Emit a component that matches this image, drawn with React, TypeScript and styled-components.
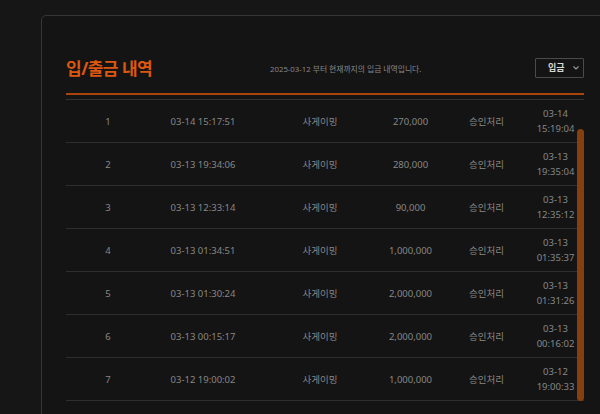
import React, { useLayoutEffect, useRef, useState } from "react";
import styled, { createGlobalStyle } from "styled-components";

const GlobalStyle = createGlobalStyle`
  html, body {
    margin: 0;
    padding: 0;
    height: 100%;
    overflow: hidden;
    background: #161616;
  }
  body {
    font-family: "Noto Sans", "Noto Sans CJK KR", sans-serif;
  }
`;

const Page = styled.div`
  padding: 15px 0 0 41px;
`;

const Card = styled.section`
  width: 518px;
  padding: 0 24px 60px;
  background: #141414;
  border: 1px solid #363636;
  border-radius: 5px;
`;

const Header = styled.header`
  display: grid;
  grid-template-columns: 204px 1fr auto;
  align-items: center;
  padding: 40px 0 11px;
  border-bottom: 2px solid #a8440c;
`;

const Title = styled.h2`
  margin: 0;
  font-family: "Noto Sans", "Noto Sans CJK KR", sans-serif;
  font-size: 17px;
  line-height: 26px;
  font-weight: 700;
  letter-spacing: -0.5px;
  color: #dd5710;
`;

const Subtitle = styled.p`
  margin: 0;
  font-size: 7.8px;
  line-height: 12px;
  color: #878787;
`;

const SelectBox = styled.button`
  display: flex;
  align-items: center;
  justify-content: space-between;
  width: 49px;
  height: 20px;
  margin-top: -3px;
  padding: 0 4px 0 12px;
  box-sizing: border-box;
  background: #141414;
  border: 1px solid #4a4a4a;
  border-radius: 1px;
  color: #d8d8d8;
  font-family: "Noto Sans", "Noto Sans CJK KR", sans-serif;
  font-size: 9px;
  font-weight: 700;
  cursor: pointer;
`;

const ScrollArea = styled.div`
  position: relative;
`;

const Scroller = styled.div`
  height: 306px;
  overflow-y: auto;
  scrollbar-width: none;
  &::-webkit-scrollbar {
    display: none;
  }
`;

const Thumb = styled.div`
  position: absolute;
  right: 0;
  width: 7px;
  border-radius: 4px;
  background: #86400f;
`;

const Table = styled.table`
  width: 100%;
  table-layout: fixed;
  border-collapse: separate;
  border-spacing: 0;
`;

const Cell = styled.td<{ $last?: boolean }>`
  height: 30px;
  padding: 6px ${(p) => (p.$last ? "9px" : "0")} 6px 0;
  border-bottom: 1px solid #2e2e2e;
  text-align: center;
  vertical-align: middle;
  font-size: 9.5px;
  line-height: 15px;
  color: #878787;
`;

const HeadCell = styled(Cell).attrs({ as: "th" })`
  font-weight: 700;
  color: #a0a0a0;
  border-bottom-color: #333333;
`;

const rows = [
  ["1", "03-14 15:17:51", "사게이밍", "270,000", "승인처리", "03-14 15:19:04"],
  ["2", "03-13 19:34:06", "사게이밍", "280,000", "승인처리", "03-13 19:35:04"],
  ["3", "03-13 12:33:14", "사게이밍", "90,000", "승인처리", "03-13 12:35:12"],
  ["4", "03-13 01:34:51", "사게이밍", "1,000,000", "승인처리", "03-13 01:35:37"],
  ["5", "03-13 01:30:24", "사게이밍", "2,000,000", "승인처리", "03-13 01:31:26"],
  ["6", "03-13 00:15:17", "사게이밍", "2,000,000", "승인처리", "03-13 00:16:02"],
  ["7", "03-12 19:00:02", "사게이밍", "1,000,000", "승인처리", "03-12 19:00:33"],
];

const heads = ["번호", "신청일시", "게임", "금액", "상태", "처리일시"];

export default function App() {
  const ref = useRef<HTMLDivElement>(null);
  const [thumb, setThumb] = useState({ top: 0, height: 0 });

  useLayoutEffect(() => {
    const el = ref.current;
    if (!el) return;
    el.scrollTop = el.scrollHeight;
    const h = el.clientHeight;
    const c = el.scrollHeight;
    setThumb({ top: (el.scrollTop / c) * h, height: (h * h) / c });
  }, []);

  return (
    <>
      <GlobalStyle />
      <Page>
        <Card>
          <Header>
            <Title>입/출금 내역</Title>
            <Subtitle>2025-03-12 부터 현재까지의 입금 내역입니다.</Subtitle>
            <SelectBox type="button">
              입금
              <svg width="6" height="4" viewBox="0 0 6 4">
                <polyline points="0.5,0.5 3,3 5.5,0.5" fill="none" stroke="#9a9a9a" strokeWidth="1.1" />
              </svg>
            </SelectBox>
          </Header>
          <ScrollArea>
            <Scroller ref={ref}>
              <Table>
                <colgroup>
                  <col style={{ width: 84 }} />
                  <col style={{ width: 106 }} />
                  <col style={{ width: 128 }} />
                  <col style={{ width: 53 }} />
                  <col style={{ width: 99 }} />
                  <col />
                </colgroup>
                <thead>
                  <tr>
                    {heads.map((h, i) => (
                      <HeadCell key={h} $last={i === 5}>
                        {h}
                      </HeadCell>
                    ))}
                  </tr>
                </thead>
                <tbody>
                  {rows.map((r) => (
                    <tr key={r[0]}>
                      {r.map((v, i) => (
                        <Cell key={i} $last={i === 5}>
                          {v}
                        </Cell>
                      ))}
                    </tr>
                  ))}
                </tbody>
              </Table>
            </Scroller>
            <Thumb style={{ top: thumb.top, height: thumb.height }} />
          </ScrollArea>
        </Card>
      </Page>
    </>
  );
}
